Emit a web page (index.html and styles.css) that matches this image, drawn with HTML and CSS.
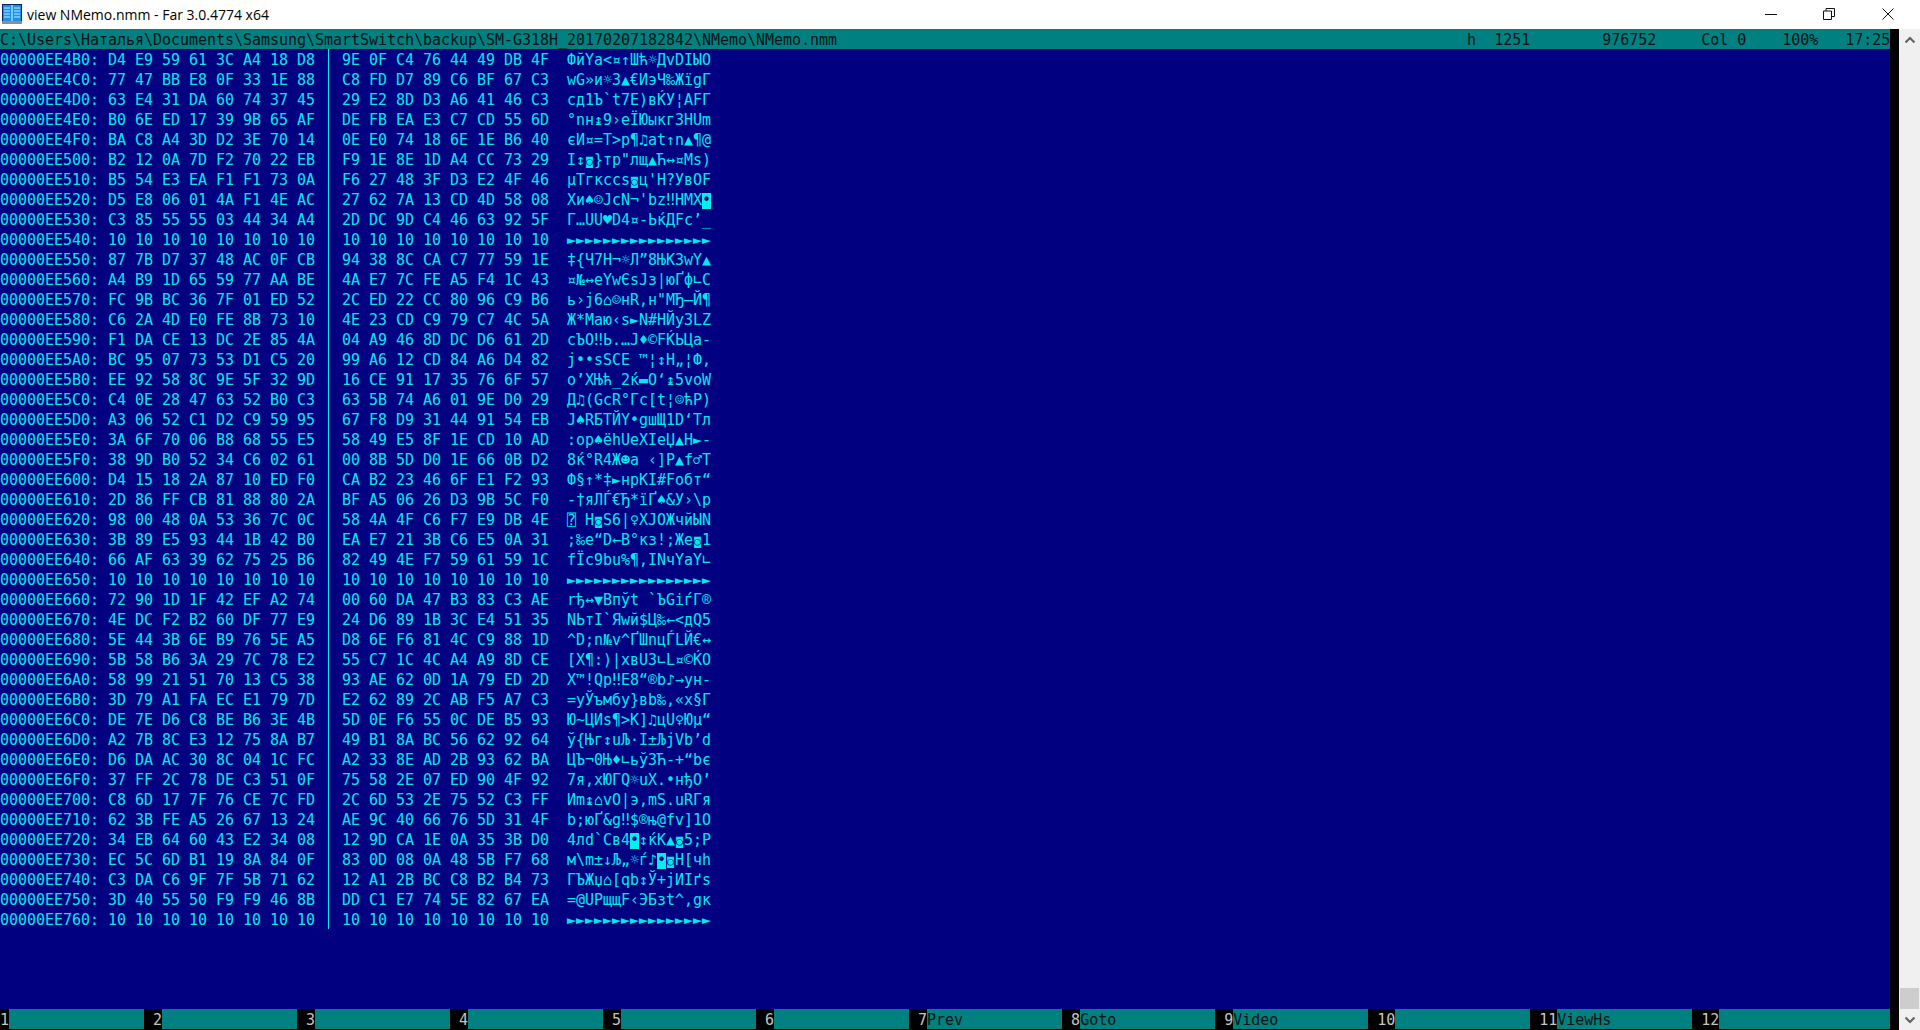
FILE: index.html
```html
<!DOCTYPE html>
<html lang="ru">
<head>
<meta charset="utf-8">
<title>view NMemo.nmm - Far 3.0.4774 x64</title>
<link rel="stylesheet" href="styles.css">
</head>
<body>
<div class="window">
  <header class="titlebar">
    <svg class="app-icon" viewBox="0 0 20 20" width="20" height="20" aria-hidden="true">
      <rect x="0" y="0" width="20" height="20" fill="#0a1f5c"/>
      <rect x="1" y="1" width="8" height="16" fill="#1e8fe8"/>
      <rect x="11" y="1" width="8" height="16" fill="#1e8fe8"/>
      <rect x="9" y="1" width="2" height="16" fill="#6fd0f5"/>
      <path d="M2 4h6M2 7h6M2 10h6M2 13h6M12 4h6M12 7h6M12 10h6M12 13h6" stroke="#bfeaff" stroke-width="1"/>
      <rect x="0" y="17" width="20" height="3" fill="#8a8f96"/>
    </svg>
    <span class="title">view NMemo.nmm - Far 3.0.4774 x64</span>
    <div class="controls">
      <span class="ctl"><svg width="12" height="12" viewBox="0 0 12 12"><path d="M0 6.5h12" stroke="#111" fill="none"/></svg></span>
      <span class="ctl"><svg width="12" height="12" viewBox="0 0 12 12"><path d="M.5 3h8v8.500h-8zM3 3V.5h8.500v8H8.500" stroke="#111" fill="none"/></svg></span>
      <span class="ctl"><svg width="12" height="12" viewBox="0 0 12 12"><path d="M.5.5l11 11M11.500.5l-11 11" stroke="#111" fill="none"/></svg></span>
    </div>
  </header>
  <main class="client">
    <section class="console">
      <pre class="status">C:\Users\Наталья\Documents\Samsung\SmartSwitch\backup\SM-G318H_20170207182842\NMemo\NMemo.nmm                                                                      h  1251        976752     Col 0    100%   17:25</pre>
      <div class="view">
        <div class="dump">
<pre class="col-left">00000EE4B0: D4 E9 59 61 3C A4 18 D8
00000EE4C0: 77 47 BB E8 0F 33 1E 88
00000EE4D0: 63 E4 31 DA 60 74 37 45
00000EE4E0: B0 6E ED 17 39 9B 65 AF
00000EE4F0: BA C8 A4 3D D2 3E 70 14
00000EE500: B2 12 0A 7D F2 70 22 EB
00000EE510: B5 54 E3 EA F1 F1 73 0A
00000EE520: D5 E8 06 01 4A F1 4E AC
00000EE530: C3 85 55 55 03 44 34 A4
00000EE540: 10 10 10 10 10 10 10 10
00000EE550: 87 7B D7 37 48 AC 0F CB
00000EE560: A4 B9 1D 65 59 77 AA BE
00000EE570: FC 9B BC 36 7F 01 ED 52
00000EE580: C6 2A 4D E0 FE 8B 73 10
00000EE590: F1 DA CE 13 DC 2E 85 4A
00000EE5A0: BC 95 07 73 53 D1 C5 20
00000EE5B0: EE 92 58 8C 9E 5F 32 9D
00000EE5C0: C4 0E 28 47 63 52 B0 C3
00000EE5D0: A3 06 52 C1 D2 C9 59 95
00000EE5E0: 3A 6F 70 06 B8 68 55 E5
00000EE5F0: 38 9D B0 52 34 C6 02 61
00000EE600: D4 15 18 2A 87 10 ED F0
00000EE610: 2D 86 FF CB 81 88 80 2A
00000EE620: 98 00 48 0A 53 36 7C 0C
00000EE630: 3B 89 E5 93 44 1B 42 B0
00000EE640: 66 AF 63 39 62 75 25 B6
00000EE650: 10 10 10 10 10 10 10 10
00000EE660: 72 90 1D 1F 42 EF A2 74
00000EE670: 4E DC F2 B2 60 DF 77 E9
00000EE680: 5E 44 3B 6E B9 76 5E A5
00000EE690: 5B 58 B6 3A 29 7C 78 E2
00000EE6A0: 58 99 21 51 70 13 C5 38
00000EE6B0: 3D 79 A1 FA EC E1 79 7D
00000EE6C0: DE 7E D6 C8 BE B6 3E 4B
00000EE6D0: A2 7B 8C E3 12 75 8A B7
00000EE6E0: D6 DA AC 30 8C 04 1C FC
00000EE6F0: 37 FF 2C 78 DE C3 51 0F
00000EE700: C8 6D 17 7F 76 CE 7C FD
00000EE710: 62 3B FE A5 26 67 13 24
00000EE720: 34 EB 64 60 43 E2 34 08
00000EE730: EC 5C 6D B1 19 8A 84 0F
00000EE740: C3 DA C6 9F 7F 5B 71 62
00000EE750: 3D 40 55 50 F9 F9 46 8B
00000EE760: 10 10 10 10 10 10 10 10</pre>
<div class="sep"></div>
<pre class="col-right">9E 0F C4 76 44 49 DB 4F
C8 FD D7 89 C6 BF 67 C3
29 E2 8D D3 A6 41 46 C3
DE FB EA E3 C7 CD 55 6D
0E E0 74 18 6E 1E B6 40
F9 1E 8E 1D A4 CC 73 29
F6 27 48 3F D3 E2 4F 46
27 62 7A 13 CD 4D 58 08
2D DC 9D C4 46 63 92 5F
10 10 10 10 10 10 10 10
94 38 8C CA C7 77 59 1E
4A E7 7C FE A5 F4 1C 43
2C ED 22 CC 80 96 C9 B6
4E 23 CD C9 79 C7 4C 5A
04 A9 46 8D DC D6 61 2D
99 A6 12 CD 84 A6 D4 82
16 CE 91 17 35 76 6F 57
63 5B 74 A6 01 9E D0 29
67 F8 D9 31 44 91 54 EB
58 49 E5 8F 1E CD 10 AD
00 8B 5D D0 1E 66 0B D2
CA B2 23 46 6F E1 F2 93
BF A5 06 26 D3 9B 5C F0
58 4A 4F C6 F7 E9 DB 4E
EA E7 21 3B C6 E5 0A 31
82 49 4E F7 59 61 59 1C
10 10 10 10 10 10 10 10
00 60 DA 47 B3 83 C3 AE
24 D6 89 1B 3C E4 51 35
D8 6E F6 81 4C C9 88 1D
55 C7 1C 4C A4 A9 8D CE
93 AE 62 0D 1A 79 ED 2D
E2 62 89 2C AB F5 A7 C3
5D 0E F6 55 0C DE B5 93
49 B1 8A BC 56 62 92 64
A2 33 8E AD 2B 93 62 BA
75 58 2E 07 ED 90 4F 92
2C 6D 53 2E 75 52 C3 FF
AE 9C 40 66 76 5D 31 4F
12 9D CA 1E 0A 35 3B D0
83 0D 08 0A 48 5B F7 68
12 A1 2B BC C8 B2 B4 73
DD C1 E7 74 5E 82 67 EA
10 10 10 10 10 10 10 10</pre>
<div class="col-text">
<div class="ln">ФйYa&lt;¤↑Шћ☼ДvDIЫO</div>
<div class="ln">wG»и☼3▲€ИэЧ‰ЖїgГ</div>
<div class="ln">cд1Ъ`t7E)вЌУ¦AFГ</div>
<div class="ln">°nн↨9›eЇЮыкгЗНUm</div>
<div class="ln">єИ¤=Т&gt;p¶♫аt↑n▲¶@</div>
<div class="ln">І↕<span class="cc">◙</span>}тp"лщ▲Ћ↔¤Мs)</div>
<div class="ln">µTгкссs<span class="cc">◙</span>ц'H?УвOF</div>
<div class="ln">Хи♠☺JсN¬'bz‼НMX<span class="inv">•</span></div>
<div class="ln">Г…UU♥D4¤-ЬќДFc’_</div>
<div class="ln">►►►►►►►►►►►►►►►►</div>
<div class="ln">‡{Ч7H¬☼Л”8ЊКЗwY▲</div>
<div class="ln">¤№↔eYwЄѕJз|юҐф∟C</div>
<div class="ln">ь›ј6⌂☺нR,н"МЂ–Й¶</div>
<div class="ln">Ж*Mаю‹s►N#НЙyЗLZ</div>
<div class="ln">сЪО‼Ь.…J♦©FЌЬЦa-</div>
<div class="ln">ј••sSСЕ ™¦↕Н„¦Ф‚</div>
<div class="ln">о’XЊћ_2ќ▬О‘↨5voW</div>
<div class="ln">Д♫(GcR°Гc[t¦☺ћР)</div>
<div class="ln">Ј♠RБТЙY•gшЩ1D‘Tл</div>
<div class="ln">:op♠ёhUеXIеЏ▲Н►-</div>
<div class="ln">8ќ°R4Ж☻a ‹]Р▲f♂Т</div>
<div class="ln">Ф§↑*‡►нрКІ#Foбт“</div>
<div class="ln">-†яЛЃ€Ђ*їҐ♠&amp;У›\р</div>
<div class="ln">⍰ H<span class="cc">◙</span>S6|♀XJOЖчйЫN</div>
<div class="ln">;‰е“D←B°кз!;Же<span class="cc">◙</span>1</div>
<div class="ln">fЇc9bu%¶‚INчYaY∟</div>
<div class="ln">►►►►►►►►►►►►►►►►</div>
<div class="ln">rђ↔▼Bпўt `ЪGіѓГ®</div>
<div class="ln">NЬтІ`Яwй$Ц‰←&lt;дQ5</div>
<div class="ln">^D;n№v^ҐШnцЃLЙ€↔</div>
<div class="ln">[X¶:)|xвUЗ∟L¤©ЌО</div>
<div class="ln">X™!Qp‼Е8“®b♪→yн-</div>
<div class="ln">=yЎъмбy}вb‰,«х§Г</div>
<div class="ln">Ю~ЦИѕ¶&gt;K]♫цU♀Юµ“</div>
<div class="ln">ў{Њг↕uЉ·I±ЉјVb’d</div>
<div class="ln">ЦЪ¬0Њ♦∟ьў3Ћ-+“bє</div>
<div class="ln">7я,xЮГQ☼uX.•нђO’</div>
<div class="ln">Иm↨⌂vО|э,mS.uRГя</div>
<div class="ln">b;юҐ&amp;g‼$®њ@fv]1O</div>
<div class="ln">4лd`Cв4<span class="inv">•</span>↕ќК▲<span class="cc">◙</span>5;Р</div>
<div class="ln">м\m±↓Љ„☼ѓ♪<span class="inv">•</span><span class="cc">◙</span>H[чh</div>
<div class="ln">ГЪЖџ⌂[qb↕Ў+јИІґs</div>
<div class="ln">=@UPщщF‹ЭБзt^‚gк</div>
<div class="ln">►►►►►►►►►►►►►►►►</div>
</div>
        </div>
      </div>
      <footer class="keybar">
        <span class="key">1</span><span class="lbl"></span>
        <span class="key"> 2</span><span class="lbl"></span>
        <span class="key"> 3</span><span class="lbl"></span>
        <span class="key"> 4</span><span class="lbl"></span>
        <span class="key"> 5</span><span class="lbl"></span>
        <span class="key"> 6</span><span class="lbl"></span>
        <span class="key"> 7</span><span class="lbl">Prev</span>
        <span class="key"> 8</span><span class="lbl">Goto</span>
        <span class="key"> 9</span><span class="lbl">Video</span>
        <span class="key"> 10</span><span class="lbl"></span>
        <span class="key"> 11</span><span class="lbl">ViewHs</span>
        <span class="key"> 12</span><span class="lbl lbl-last"></span>
      </footer>
    </section>
    <aside class="scrollbar">
      <span class="arrow"><svg width="12" height="8" viewBox="0 0 12 8"><path d="M1.500 6.500L6 2l4.500 4.500" fill="none" stroke="#606060" stroke-width="2"/></svg></span>
      <div class="track"><div class="thumb"></div></div>
      <span class="arrow"><svg width="12" height="8" viewBox="0 0 12 8"><path d="M1.500 1.500L6 6l4.500-4.500" fill="none" stroke="#606060" stroke-width="2"/></svg></span>
    </aside>
  </main>
</div>
</body>
</html>
```

FILE: styles.css
```css
* { box-sizing: border-box; }
html, body { margin: 0; padding: 0; background: #000; }
body { width: 1920px; height: 1030px; overflow: hidden; }

.window { display: flex; flex-direction: column; width: 1920px; height: 1030px; }

.titlebar {
  display: flex;
  align-items: center;
  height: 29px;
  background: #fff;
  padding-left: 2px;
}
.app-icon { flex: none; margin-right: 5px; margin-top: -1px; }
.title {
  font-family: "Open Sans", "Noto Sans", sans-serif;
  font-size: 14px;
  color: #000;
  white-space: nowrap;
}
.controls { display: flex; margin-left: auto; padding-right: 3px; }
.ctl { display: flex; align-items: center; justify-content: center; width: 58.500px; height: 29px; padding-bottom: 2px; }

.client { display: flex; flex: 1; min-height: 0; }

.console {
  display: flex;
  flex-direction: column;
  width: 1899px;
  height: 1000px;
  padding-right: 9px;
  background: #000;
  font-family: "DejaVu Sans Mono", monospace;
  font-size: 15px;
  letter-spacing: -0.03px;
  line-height: 20px;
}
pre { margin: 0; font: inherit; letter-spacing: inherit; }

.status { position: relative; flex: none; height: 20px; padding-top: 1px; background: #008080; color: #0a1414; white-space: pre; }

.view { flex: 1; min-height: 0; background: #000080; color: #00e8f0; }
.dump { display: flex; }
.col-left, .col-right, .col-text { padding-top: 1px; height: 880px; }
.col-left { width: 324px; }
.sep { width: 9px; background: linear-gradient(#00e8f0, #00e8f0) 4px 0 / 1px 100% no-repeat; }
.col-right { width: 234px; padding-left: 9px; }
.col-text { width: 144px; }
.ln { height: 20px; white-space: pre; }
.inv { background: linear-gradient(#00f0f0, #00f0f0) 0 100% / 100% 16px no-repeat; color: #000080; }
.cc { display: inline-block; width: 9px; font-size: 11px; line-height: 1; letter-spacing: 0; text-align: center; }

.keybar { display: flex; flex: none; height: 20px; white-space: pre; }
.key { flex: none; padding-top: 1px; background: #000; color: #c4c4c4; }
.lbl { flex: none; width: 135px; padding-top: 1px; background: #008080; color: #0a1414; }
.lbl-last { flex: 1; width: auto; }

.scrollbar { display: flex; flex-direction: column; width: 21px; background: #f0f0f0; }
.arrow { display: flex; flex: none; align-items: center; justify-content: center; height: 21px; }
.track { display: flex; flex: 1; flex-direction: column; justify-content: flex-end; padding: 0 1px; }
.thumb { height: 21px; background: #cdcdcd; }
```
